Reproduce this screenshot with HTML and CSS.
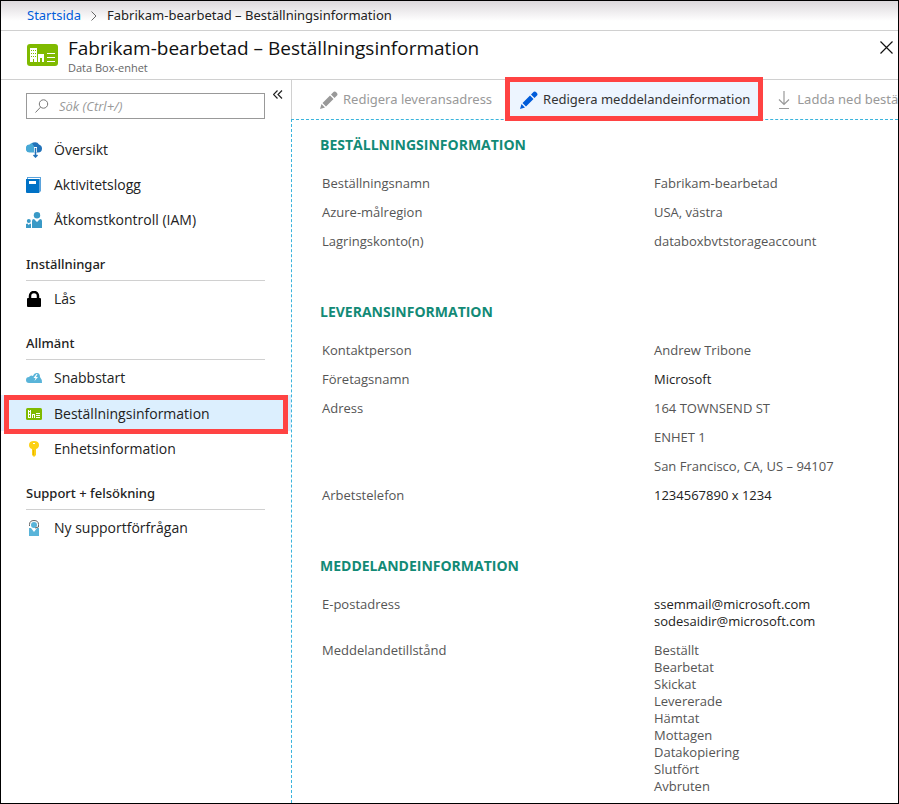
FILE: index.html
```html
<!DOCTYPE html>
<html lang="sv">
<head>
<meta charset="utf-8">
<title>Fabrikam-bearbetad – Beställningsinformation</title>
<link rel="stylesheet" href="styles.css">
</head>
<body>
<svg class="defs" aria-hidden="true">
  <symbol id="order" viewBox="0 0 31 22">
    <rect width="31" height="22" rx="3" fill="#7fba00"/>
    <path fill="#fff" fill-rule="evenodd" d="M3 4h7v14H3zM4 6v1h1V6zM6 6v1h1V6zM8 6v1h1V6zM4 9v1h1V9zM6 9v1h1V9zM8 9v1h1V9zM4 12v1h1v-1zM6 12v1h1v-1zM8 12v1h1v-1zM6 15v3h1v-3zM11 10h6v8h-2v-4h-2v4h-2zM20 9h8v1h-8zM20 13h8v1h-8zM20 17h8v1h-8z"/>
  </symbol>
  <symbol id="order-small" viewBox="0 0 16 12">
    <rect width="16" height="12" rx="1.500" fill="#7fba00"/>
    <path fill="#fff" d="M2 2h1v8H2zM4 2h1v8H4zM2 3h3v1H2zM2 6h3v1H2zM2 9h3v1H2zM6 6h3v4H8V7H7v3H6zM10 5h4v1h-4zM10 7h4v1h-4zM10 9h4v1h-4z"/>
  </symbol>
  <symbol id="pencil" viewBox="0 0 18 18">
    <path fill="currentColor" d="M0 18l1.500-5 3.500 3.500zM2.500 12l7.500-7.500 3.500 3.500L6 15.500zM11 3.500l2-2q1.500-2 3.500 0t0 3.500l-2 2z"/>
  </symbol>
</svg>
<div class="page">
  <nav class="crumbs" aria-label="Sökväg">
    <a href="#">Startsida</a>
    <svg width="6" height="10" viewBox="0 0 6 10"><path d="M.5.5L5 5 .5 9.500" fill="none" stroke="#666"/></svg>
    <span>Fabrikam-bearbetad – Beställningsinformation</span>
  </nav>
  <header class="title">
    <svg class="title-icon" width="31" height="22"><use href="#order"/></svg>
    <div class="title-text">
      <h1>Fabrikam-bearbetad – Beställningsinformation</h1>
      <p>Data Box-enhet</p>
    </div>
    <button class="close" aria-label="Stäng"><svg width="13" height="13" viewBox="0 0 13 13"><path d="M.5.5l12 12M12.500.5l-12 12" fill="none" stroke="#111" stroke-width="1.200"/></svg></button>
  </header>
  <div class="body">
    <aside class="side">
      <div class="search-row">
        <label class="search">
          <svg width="14" height="14" viewBox="0 0 14 14"><g fill="none" stroke="#777"><circle cx="8.500" cy="5" r="4.200"/><path d="M5.500 8.200L.5 13.500"/></g></svg>
          <input type="search" placeholder="Sök (Ctrl+/)" aria-label="Sök">
        </label>
        <button class="collapse" aria-label="Dölj meny"><svg width="10" height="9" viewBox="0 0 10 9"><path d="M4.500.5l-4 4 4 4M9 .5l-4 4 4 4" fill="none" stroke="#222" stroke-width="1.200"/></svg></button>
      </div>
      <ul>
        <li><a href="#"><svg width="16" height="16" viewBox="0 0 16 16"><path fill="#48a9d6" d="M4 10.500a4 4 0 0 1-.5-8Q5.500 0 9 1v9.500z"/><path fill="#2272b9" d="M6 1q5-2 7 1.500 3 1 3 4 0 4-4 4H9V6z"/><path d="M9.500 5v5.500" stroke="#fff" stroke-width="3"/><path d="M9.500 6v8M7.500 13l2 2 2-2" fill="none" stroke="#2272b9" stroke-width="1.500"/></svg>Översikt</a></li>
        <li><a href="#"><svg width="16" height="16" viewBox="0 0 16 16"><path fill="#5ba3dc" d="M1 0h14v14l-2 2H1z"/><path fill="#0072c6" d="M0 2h13v14H1q-1 0-1-1z"/><path fill="#fff" d="M3 4h7v3H3zM2 1h12v1H2z"/></svg>Aktivitetslogg</a></li>
        <li><a href="#"><svg width="16" height="16" viewBox="0 0 16 16"><g fill="#3999c6"><circle cx="11" cy="3.200" r="3.200"/><path d="M6 16V9q0-2 2-2l3 3 3-3q2 0 2 2v7z"/><circle cx="2.800" cy="9" r="2"/><path d="M0 16v-4l1.500-.5 1.300 1.500L4 11.500l1 .5v4z"/></g></svg>Åtkomstkontroll (IAM)</a></li>
      </ul>
      <h2>Inställningar</h2>
      <ul>
        <li><a href="#"><svg width="16" height="16" viewBox="0 0 16 16"><rect x="1" y="7" width="14" height="9" rx="1"/><path d="M4 8V5a4 4 0 0 1 8 0v3" fill="none" stroke="#000" stroke-width="2.500"/></svg>Lås</a></li>
      </ul>
      <h2>Allmänt</h2>
      <ul>
        <li><a href="#"><svg width="16" height="16" viewBox="0 0 16 16"><path fill="#59b4d9" d="M3 13a3 3 0 0 1 0-6 3 3 0 0 1 4-1q1-3 4-3 3 0 3 4 2 2 2 6z"/><path fill="#fff" d="M10.500 4L7.500 8h2l-1 3 3.500-4h-2l1.500-3z"/></svg>Snabbstart</a></li>
        <li class="current"><a href="#" aria-current="page"><svg width="16" height="12"><use href="#order-small"/></svg>Beställningsinformation</a></li>
        <li><a href="#"><svg width="16" height="16" viewBox="0 0 16 16"><path fill="#fcd116" fill-rule="evenodd" d="M8 0q5 0 5 4 0 3-3 4v6l-2 2-2-2V8Q3 7 3 4q0-4 5-4zM7 2v1h2V2z"/><path d="M7.500 9v5" stroke="#e9b500"/></svg>Enhetsinformation</a></li>
      </ul>
      <h2>Support + felsökning</h2>
      <ul>
        <li><a href="#"><svg width="16" height="16" viewBox="0 0 16 16"><path fill="#59b4d9" d="M3 8h2l3 4 3-4h2v8H3z"/><circle cx="8" cy="5" r="3" fill="#59b4d9"/><path d="M3.500 6V4.500q0-4 4.500-4t4.500 4V7L9 8" fill="none" stroke="#666"/></svg>Ny supportförfrågan</a></li>
      </ul>
    </aside>
    <main>
      <div class="tools">
        <button class="tool"><svg width="18" height="18"><use href="#pencil"/></svg>Redigera leveransadress</button>
        <button class="tool active"><svg width="18" height="18"><use href="#pencil"/></svg>Redigera meddelandeinformation</button>
        <button class="tool"><svg width="14" height="18" viewBox="0 0 14 18"><path d="M6 0v13M1 8.500l5 5 5-5M1 17.500h10" fill="none" stroke="#999" stroke-width="1.200"/></svg>Ladda ned beställningsinformation</button>
      </div>
      <div class="content">
        <section>
          <h3>BESTÄLLNINGSINFORMATION</h3>
          <dl>
            <dt>Beställningsnamn</dt><dd>Fabrikam-bearbetad</dd>
            <dt>Azure-målregion</dt><dd>USA, västra</dd>
            <dt>Lagringskonto(n)</dt><dd>databoxbvtstorageaccount</dd>
          </dl>
        </section>
        <section>
          <h3>LEVERANSINFORMATION</h3>
          <dl>
            <dt>Kontaktperson</dt><dd>Andrew Tribone</dd>
            <dt>Företagsnamn</dt><dd class="dark">Microsoft</dd>
            <dt>Adress</dt><dd>164 TOWNSEND ST</dd>
            <dd>ENHET 1</dd>
            <dd>San Francisco, CA, US – 94107</dd>
            <dt>Arbetstelefon</dt><dd class="dark">1234567890 x 1234</dd>
          </dl>
        </section>
        <section>
          <h3>MEDDELANDEINFORMATION</h3>
          <dl>
            <dt>E-postadress</dt><dd class="dark">ssemmail@microsoft.com<br>sodesaidir@microsoft.com</dd>
            <dt>Meddelandetillstånd</dt><dd>Beställt<br>Bearbetat<br>Skickat<br>Levererade<br>Hämtat<br>Mottagen<br>Datakopiering<br>Slutfört<br>Avbruten</dd>
          </dl>
        </section>
      </div>
    </main>
  </div>
</div>
</body>
</html>
```
FILE: styles.css
```css
* { box-sizing: border-box; }
body { margin: 0; background: #fff; color: #222; font: 13px/17px "Open Sans", "Noto Sans", sans-serif; }
h1, h2, h3, p, ul, dl, dd { margin: 0; padding: 0; }
ul { list-style: none; }
a { color: inherit; text-decoration: none; }
button { border: 0; padding: 0; background: none; font: inherit; color: inherit; }
svg { flex: none; display: block; }
.defs { position: absolute; width: 0; height: 0; }
.page { min-height: 100vh; display: flex; flex-direction: column; border: 1px solid #000; overflow: hidden; }
.crumbs, .tools, .side h2 { font-family: "Noto Sans", "Open Sans", sans-serif; }

.crumbs { display: flex; align-items: center; gap: 10px; height: 30px; padding: 0 26px; border-bottom: 1px solid #d0d0d0; background: linear-gradient(#dcd8dc, #fff 20px); }
.crumbs a { color: #015cda; }

.title { display: flex; align-items: flex-start; height: 49px; padding: 4px 5px 0 26px; border-bottom: 1px solid #d0d0d0; }
.title-icon { margin-top: 9px; }
.title-text { flex: 1; margin-left: 10px; }
h1 { font-size: 19px; line-height: 26px; font-weight: 500; color: #111; }
.title p { font-size: 11px; line-height: 14px; color: #666; }
.close { margin-top: 6px; }

.body { flex: 1; display: flex; }
.side { width: 290px; flex: none; }
.search-row { display: flex; align-items: flex-start; gap: 8px; padding: 13px 0 13px 25px; }
.search { display: flex; align-items: center; gap: 10px; width: 239px; height: 26px; padding: 0 8px; border: 1px solid #999; }
.search input { flex: 1; min-width: 0; border: 0; padding: 0; outline: 0; background: none; font: italic 13px/17px "Open Sans", sans-serif; }
.search input::placeholder { color: #999; opacity: 1; }
.collapse { margin-top: -3px; }
.side li { position: relative; }
.side a { display: flex; align-items: center; gap: 12px; height: 35px; padding-left: 25px; font-size: 14px; }
.side h2 { height: 44px; margin: 0 26px 0 25px; padding-top: 19px; border-bottom: 1px solid #d0d0d0; font-size: 13px; line-height: 17px; font-weight: 500; }
.side .current { padding-top: 1px; background: #dceffe; }
.current::after { content: ""; position: absolute; inset: 0 3px -3px; border: 5px solid #ff4343; }

main { flex: 1; min-width: 0; display: flex; flex-direction: column; }
.tools { display: flex; height: 39px; padding-left: 13px; border-left: 1px solid #d0d0d0; }
.tool { position: relative; display: flex; align-items: center; gap: 5px; padding: 0 13px 0 15px; color: #999; white-space: nowrap; }
.tool.active { color: #333; background: #edf5ff; }
.tool.active svg { color: #015cda; }
.tool.active::after { content: ""; position: absolute; inset: -3px 0 -2px; border: 5px solid #ff4343; }
.content { flex: 1; padding: 16px 28px 7px; border: 1px dashed #3ab4dc; border-width: 1px 0 0 1px; }
section + section { margin-top: 53px; }
h3 { font-size: 14px; line-height: 17px; font-weight: 700; color: #128a76; }
dl { display: grid; grid-template-columns: 332px 1fr; row-gap: 12px; padding: 22px 2px 0; color: #555; }
dd { grid-column: 2; }
.dark { color: #222; }
```
